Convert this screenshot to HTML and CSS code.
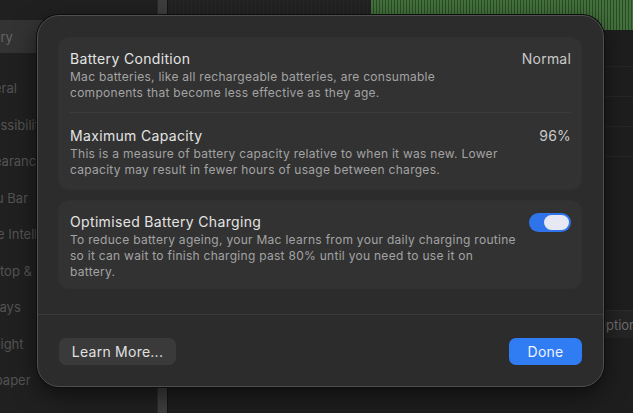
FILE: index.html
```html
<!DOCTYPE html>
<html>
<head>
<meta charset="utf-8">
<link rel="stylesheet" href="styles.css">
</head>
<body>
<div class="backdrop">
  <aside class="sidebar">
    <div class="side-top"></div>
    <div class="side-item selected">Battery</div>
    <div class="side-item">General</div>
    <div class="side-item">Accessibility</div>
    <div class="side-item">Appearance</div>
    <div class="side-item">Menu Bar</div>
    <div class="side-item">Apple Intelligence</div>
    <div class="side-item">Desktop &amp; Dock</div>
    <div class="side-item">Displays</div>
    <div class="side-item">Spotlight</div>
    <div class="side-item">Wallpaper</div>
  </aside>
  <div class="splitter"></div>
  <main class="main">
    <div class="chart-row">
      <div class="chart-gap"></div>
      <div class="chart"></div>
    </div>
    <div class="main-body">
      <div class="main-line"></div>
      <div class="main-line"></div>
      <div class="main-line"></div>
      <div class="main-line"></div>
      <div class="main-row"><span class="main-label">Options</span></div>
    </div>
  </main>
</div>

<div class="dialog">
  <div class="dialog-content">
    <section class="card">
      <div class="row">
        <div class="row-text">
          <div class="title">Battery Condition</div>
          <div class="desc">Mac batteries, like all rechargeable batteries, are consumable<br>components that become less effective as they age.</div>
        </div>
        <div class="value">Normal</div>
      </div>
      <div class="divider"></div>
      <div class="row row-second">
        <div class="row-text">
          <div class="title">Maximum Capacity</div>
          <div class="desc">This is a measure of battery capacity relative to when it was new. Lower<br>capacity may result in fewer hours of usage between charges.</div>
        </div>
        <div class="value">96%</div>
      </div>
    </section>
    <section class="card">
      <div class="row row-toggle">
        <div class="row-text">
          <div class="title">Optimised Battery Charging</div>
          <div class="desc">To reduce battery ageing, your Mac learns from your daily charging routine<br>so it can wait to finish charging past 80% until you need to use it on<br>battery.</div>
        </div>
        <div class="toggle"><div class="knob"></div></div>
      </div>
    </section>
  </div>
  <div class="dialog-sep"></div>
  <footer class="dialog-footer">
    <button class="btn btn-secondary">Learn More...</button>
    <button class="btn btn-primary">Done</button>
  </footer>
</div>
</body>
</html>
```
FILE: styles.css
```css
* { box-sizing: border-box; }
html, body {
  margin: 0;
  padding: 0;
  width: 633px;
  height: 413px;
  overflow: hidden;
  background: #1b1b1b;
  font-family: Inter, "Noto Sans", "Liberation Sans", sans-serif;
}
.backdrop {
  display: flex;
  width: 633px;
  height: 413px;
}
.sidebar {
  width: 157px;
  flex: none;
  background: #202020;
  display: flex;
  flex-direction: column;
}
.side-top { height: 20px; }
.side-item {
  height: 36.5px;
  display: flex;
  align-items: center;
  margin-left: -31px;
  font-size: 13px;
  color: #535353;
  white-space: nowrap;
}
.side-item.selected {
  background: #333333;
  height: 33px;
  margin-bottom: 17px;
  color: #666666;
}
.splitter {
  width: 11px;
  flex: none;
  background: #3e3e3e;
  border-left: 1px solid #2a2a2a;
  border-right: 1px solid #151515;
}
.main {
  flex: 1;
  display: flex;
  flex-direction: column;
  background: #1e1e1e;
}
.chart-row {
  display: flex;
  height: 30px;
}
.chart-gap {
  width: 203px;
  background: repeating-linear-gradient(90deg, #222 0 3px, #262626 3px 4px);
}
.chart {
  flex: 1;
  background: repeating-linear-gradient(90deg, #44723c 0 2px, #2b4a27 2px 3px);
}
.main-body {
  flex: 1;
  display: flex;
  flex-direction: column;
  padding-top: 36px;
}
.main-line {
  height: 30px;
  border-top: 1px solid #262626;
}
.main-row {
  margin-top: 124px;
  height: 28px;
  background: #242424;
  border-top: 1px solid #2c2c2c;
  display: flex;
  align-items: center;
  padding-left: 428px;
  white-space: nowrap;
  overflow: hidden;
}
.main-label {
  font-size: 13px;
  color: #6e6e6e;
}

/* Dialog */
.dialog {
  position: absolute;
  left: 37px;
  top: 15px;
  width: 567px;
  height: 372px;
  background: #2c2c2c;
  border-radius: 22px;
  border: 1px solid #4f4f4f;
  box-shadow: 0 0 0 1px #0e0e0e, 0 8px 24px rgba(0,0,0,0.55);
  display: flex;
  flex-direction: column;
}
.dialog-content {
  padding: 22px 22px 0 21px;
  display: flex;
  flex-direction: column;
  gap: 12px;
  height: 298px;
}
.card {
  background: #323232;
  border-radius: 9px;
  box-shadow: 0 0 0 1px rgba(255,255,255,0.02);
}
.row {
  display: flex;
  justify-content: space-between;
  align-items: flex-start;
  padding: 12px 10px 11px 11px;
}
.row-second { padding-top: 14px; padding-bottom: 11px; }
.row-toggle { padding-top: 12px; padding-bottom: 8px; }
.title {
  font-size: 14px;
  line-height: 18px;
  letter-spacing: 0.34px;
  color: #e4e4e4;
  margin-bottom: 1px;
}
.desc {
  font-size: 12px;
  line-height: 16px;
  letter-spacing: 0.28px;
  color: #a3a3a3;
}
.value {
  font-size: 14px;
  line-height: 18px;
  letter-spacing: 0.2px;
  color: #c9c9c9;
}
.divider {
  height: 1px;
  background: #3c3c3c;
  margin: 0 10px 0 11px;
}
.toggle {
  width: 42px;
  height: 19px;
  border-radius: 10px;
  background: #2f74ea;
  position: relative;
  flex: none;
}
.knob {
  position: absolute;
  right: 2px;
  top: 2px;
  width: 25px;
  height: 15px;
  border-radius: 8px;
  background: #e6e8f4;
}
.dialog-sep {
  height: 1px;
  background: #3b3b3b;
}
.dialog-footer {
  flex: 1;
  display: flex;
  justify-content: space-between;
  align-items: flex-start;
  padding: 23px 21px 0 21px;
}
.btn {
  font-family: inherit;
  font-size: 14px;
  height: 27px;
  border: none;
  border-radius: 7px;
  padding: 0 10px;
  letter-spacing: 0.25px;
  cursor: default;
}
.btn-secondary {
  width: 117px;
  background: #3a3a3a;
  color: #e0e0e0;
}
.btn-primary {
  width: 73px;
  background: #2f7cf3;
  color: #eef3ff;
}
```
